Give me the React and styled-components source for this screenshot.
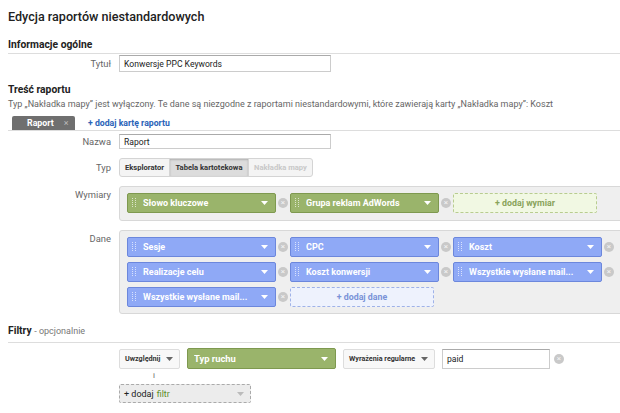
import React from "react";
import styled, { createGlobalStyle } from "styled-components";

const Global = createGlobalStyle`
  html, body { margin: 0; padding: 0; background: #fff; overflow: hidden; }
  body { font-family: Roboto, "Liberation Sans", Arial, sans-serif; color: #333; }
`;

const Page = styled.div`
  width: 620px;
  padding: 0 0 0 8px;
  box-sizing: border-box;
`;

const Title = styled.h1`
  margin: 0;
  padding-top: 8px;
  font-size: 12.6px;
  font-weight: 500;
  color: #222;
  line-height: 18px;
`;

const SectionHead = styled.div`
  margin-top: ${p => p.$top}px;
  font-size: 10.3px;
  font-weight: 700;
  color: #222;
  line-height: 14px;
  padding-bottom: ${p => p.$pb || 0}px;
  border-bottom: ${p => (p.$line ? "1px solid #ddd" : "none")};
  span { font-weight: 400; font-size: 9px; color: #777; }
`;

const Note = styled.div`
  font-size: 9px;
  color: #666;
  line-height: 12px;
  margin-top: 1px;
  white-space: nowrap;
`;

const Row = styled.div`
  display: grid;
  grid-template-columns: 103px 1fr;
  column-gap: 8px;
  align-items: ${p => p.$align || "center"};
  margin-top: ${p => p.$top || 0}px;
`;

const Label = styled.div`
  text-align: right;
  font-size: 9.4px;
  line-height: 12px;
  color: #666;
  padding-top: ${p => p.$pt || 0}px;
`;

const TextInput = styled.div`
  width: ${p => p.$w}px;
  height: ${p => p.$h || 16}px;
  box-sizing: border-box;
  border: 1px solid #ccc;
  border-top-color: #aaa;
  background: #fff;
  font-size: 8.6px;
  color: #222;
  padding-left: 4px;
  display: flex;
  align-items: center;
  flex: none;
`;

const TabBar = styled.div`
  display: flex;
  align-items: flex-end;
  margin-top: 6px;
  padding-left: 4px;
  border-bottom: 1px solid #ddd;
`;

const Tab = styled.div`
  width: 63px;
  height: 14px;
  background: #6f6f6f;
  border-radius: 2px 2px 0 0;
  color: #fff;
  font-size: 8.8px;
  font-weight: 700;
  display: flex;
  align-items: center;
  padding-left: 15px;
  box-sizing: border-box;
  gap: 10px;
  span { font-weight: 400; color: #bbb; font-size: 9px; }
`;

const AddTab = styled.div`
  margin-left: 13px;
  font-size: 8.7px;
  font-weight: 700;
  color: #2a63b8;
  line-height: 14px;
`;

const Segmented = styled.div`
  display: flex;
  width: max-content;
  border: 1px solid #d4d4d4;
  border-radius: 3px;
  background: #f4f4f4;
  height: 19px;
  box-sizing: border-box;
`;

const SegBtn = styled.div`
  width: ${p => p.$w}px;
  display: flex;
  align-items: center;
  justify-content: center;
  font-size: 7.6px;
  font-weight: 700;
  color: ${p => (p.$disabled ? "#c8c8c8" : "#333")};
  background: ${p => (p.$active ? "#dcdcdc" : "transparent")};
  box-shadow: ${p => (p.$active ? "inset 0 1px 2px rgba(0,0,0,0.2)" : "none")};
  border-left: ${p => (p.$first ? "none" : "1px solid #d4d4d4")};
`;

const Well = styled.div`
  width: 520px;
  background: #efefef;
  border: 1px solid #d8d8d8;
  border-radius: 3px;
  padding: 6px 0 ${p => p.$pb}px 7px;
  display: grid;
  grid-template-columns: repeat(3, 163px);
  row-gap: 5px;
`;

const Slot = styled.div`
  display: flex;
  align-items: center;
`;

const Chip = styled.div`
  width: 149px;
  height: ${p => p.$h || 20}px;
  box-sizing: border-box;
  border-radius: 2px;
  background: ${p => (p.$kind === "dim" ? "#9ab46b" : "#8fa9f6")};
  border: 1px solid ${p => (p.$kind === "dim" ? "#7e994f" : "#6c87dc")};
  display: flex;
  align-items: center;
  padding: 0 7px 0 ${p => p.$pl || 4}px;
  margin-right: ${p => p.$mr || 0}px;
  color: #fff;
  font-size: ${p => p.$fs || 9}px;
  font-weight: 700;
  flex: none;
  svg { flex: none; }
`;

const ChipText = styled.div`
  flex: 1;
  margin-left: ${p => p.$ml ?? 6}px;
  white-space: nowrap;
  overflow: hidden;
`;

const Remove = styled.div`
  width: 10px;
  height: 10px;
  border-radius: 50%;
  background: #c9c9c9;
  margin-left: ${p => p.$ml || 2}px;
  display: flex;
  align-items: center;
  justify-content: center;
  color: #f4f4f4;
  font-size: 8px;
  line-height: 1;
  flex: none;
`;

const AddBox = styled.div`
  width: 144px;
  height: 20px;
  box-sizing: border-box;
  border: 1px dashed ${p => (p.$kind === "dim" ? "#b8cc90" : "#9fb2e8")};
  background: ${p => (p.$kind === "dim" ? "#f1f8e3" : "#eef2fd")};
  border-radius: 2px;
  display: flex;
  align-items: center;
  justify-content: center;
  font-size: 8.8px;
  font-weight: 700;
  color: ${p => (p.$kind === "dim" ? "#89a35a" : "#7a93d8")};
`;

const FilterRow = styled.div`
  display: flex;
  align-items: center;
  margin-top: 5px;
  padding-left: 111px;
  height: 21px;
`;

const SelectBtn = styled.div`
  width: ${p => p.$w}px;
  height: 20px;
  box-sizing: border-box;
  padding: 0 6px 0 5px;
  margin-right: 7px;
  border: 1px solid #ddd;
  border-radius: 2px;
  background: #f8f8f8;
  display: flex;
  align-items: center;
  justify-content: space-between;
  font-size: 7.2px;
  font-weight: 700;
  color: #333;
  flex: none;
`;

const AndText = styled.div`
  padding-left: 145px;
  font-size: 8px;
  color: #666;
  line-height: 10px;
  margin-top: 2px;
`;

const AddFilter = styled.div`
  margin: 3px 0 0 111px;
  width: 132px;
  height: 19px;
  box-sizing: border-box;
  background: #ececec;
  border: 1px dashed #aaa;
  border-radius: 2px;
  display: flex;
  align-items: center;
  padding: 0 6px 0 4px;
  font-size: 9px;
  color: #222;
  span { color: #5e8c2a; margin-left: 3px; }
  svg { margin-left: auto; }
`;

const Grip = () => (
  <svg width="5" height="10" viewBox="0 0 5 10">
    {[0, 1, 2, 3, 4].map(i => (
      <g key={i} fill="rgba(255,255,255,0.65)">
        <rect x="0" y={i * 2} width="1" height="1" />
        <rect x="3" y={i * 2} width="1" height="1" />
      </g>
    ))}
  </svg>
);

const Caret = ({ color = "#fff" }) => (
  <svg width="7" height="4" viewBox="0 0 7 4">
    <path d="M0 0 L7 0 L3.5 4 Z" fill={color} />
  </svg>
);

const ChipSlot = ({ kind, text }) => (
  <Slot>
    <Chip $kind={kind}>
      <Grip />
      <ChipText>{text}</ChipText>
      <Caret />
    </Chip>
    <Remove>×</Remove>
  </Slot>
);

const dims = ["Słowo kluczowe", "Grupa reklam AdWords"];
const metrics = [
  "Sesje",
  "CPC",
  "Koszt",
  "Realizacje celu",
  "Koszt konwersji",
  "Wszystkie wysłane mail...",
  "Wszystkie wysłane mail...",
];

export default function App() {
  return (
    <Page>
      <Global />
      <Title>Edycja raportów niestandardowych</Title>
      <SectionHead $top={12} $pb={1} $line>Informacje ogólne</SectionHead>
      <Row $top={1}>
        <Label>Tytuł</Label>
        <TextInput $w={212} $h={17}>Konwersje PPC Keywords</TextInput>
      </Row>
      <SectionHead $top={11}>Treść raportu</SectionHead>
      <Note>
        Typ „Nakładka mapy” jest wyłączony. Te dane są niezgodne z raportami niestandardowymi, które zawierają karty „Nakładka mapy”: Koszt
      </Note>
      <TabBar>
        <Tab>Raport <span>×</span></Tab>
        <AddTab>+ dodaj kartę raportu</AddTab>
      </TabBar>
      <Row $top={3}>
        <Label>Nazwa</Label>
        <TextInput $w={212} $h={15}>Raport</TextInput>
      </Row>
      <Row $top={9}>
        <Label>Typ</Label>
        <Segmented>
          <SegBtn $first $w={49}>Eksplorator</SegBtn>
          <SegBtn $active $w={78}>Tabela kartotekowa</SegBtn>
          <SegBtn $disabled $w={63}>Nakładka mapy</SegBtn>
        </Segmented>
      </Row>
      <Row $top={9} $align="start">
        <Label $pt={3}>Wymiary</Label>
        <Well $pb={7}>
          {dims.map(d => (
            <ChipSlot key={d} kind="dim" text={d} />
          ))}
          <Slot>
            <AddBox $kind="dim">+ dodaj wymiar</AddBox>
          </Slot>
        </Well>
      </Row>
      <Row $top={9} $align="start">
        <Label $pt={3}>Dane</Label>
        <Well $pb={6}>
          {metrics.map((m, i) => (
            <ChipSlot key={i} kind="metric" text={m} />
          ))}
          <Slot>
            <AddBox $kind="metric">+ dodaj dane</AddBox>
          </Slot>
        </Well>
      </Row>
      <SectionHead $top={10} $pb={4} $line>
        Filtry <span>- opcjonalnie</span>
      </SectionHead>
      <FilterRow>
        <SelectBtn $w={61}>
          Uwzględnij <Caret color="#666" />
        </SelectBtn>
        <Chip $kind="dim" $h={21} $pl={6} $fs={9.4} $mr={7}>
          <ChipText $ml={0}>Typ ruchu</ChipText>
          <Caret />
        </Chip>
        <SelectBtn $w={92}>
          Wyrażenia regularne <Caret color="#666" />
        </SelectBtn>
        <TextInput $w={108} $h={20}>paid</TextInput>
        <Remove $ml={4}>×</Remove>
      </FilterRow>
      <AndText>i</AndText>
      <AddFilter>
        + dodaj <span>filtr</span>
        <Caret color="#bbb" />
      </AddFilter>
    </Page>
  );
}
